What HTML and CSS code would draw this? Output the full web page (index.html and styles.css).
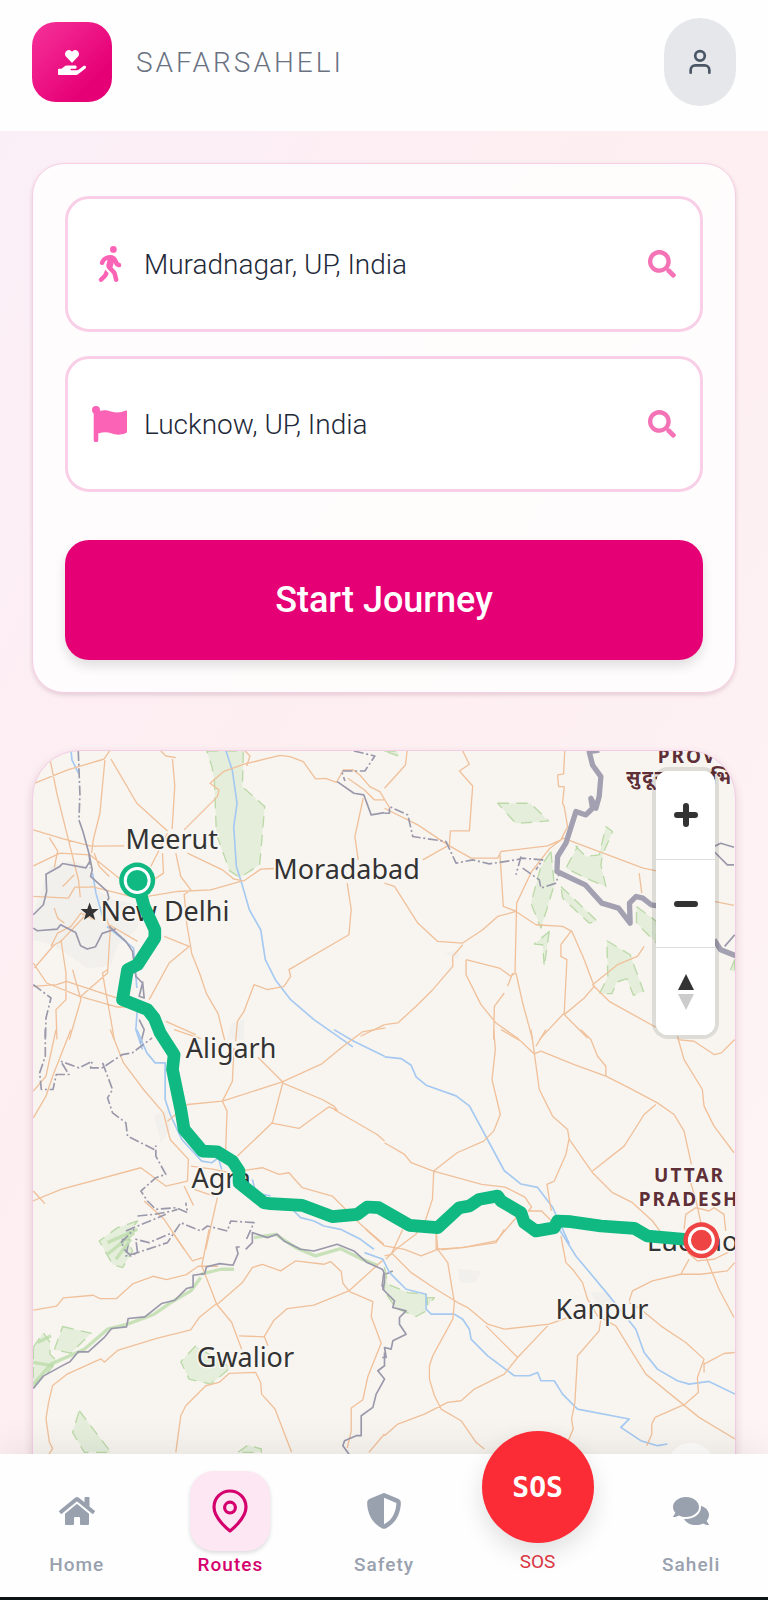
FILE: index.html
```html
<!DOCTYPE html>
<html lang="en">
<head>
  <meta charset="UTF-8" />
  <meta name="viewport" content="width=device-width, initial-scale=1.0" />
  <title>SafarSaheli - Routes</title>
  <link rel="stylesheet" href="styles.css">
</head>
<body>
  <div class="app">

    <!-- Header -->
    <header class="header">
      <div class="brand">
        <div class="logo">
          <svg width="28" height="25" viewBox="0 0 576 512" fill="currentColor"><path d="M275.3 250.5c7 7.4 18.4 7.4 25.5 0l108.9-114.2c31.6-33.2 29.8-88.2-5.6-118.8-30.8-26.7-76.7-21.9-104.9 7.7L288 36.9l-11.1-11.6C248.7-4.4 202.8-9.2 172 17.5c-35.3 30.6-37.2 85.6-5.6 118.8l108.9 114.2zm290 77.6c-11.8-10.7-30.2-10-42.6 0L430.3 402c-11.3 9.1-25.4 14-40 14H272c-8.8 0-16-7.2-16-16s7.2-16 16-16h78.3c15.9 0 30.7-10.9 33.3-26.6 3.3-20-12.1-37.4-31.6-37.4H192c-27 0-53.1 9.3-74.1 26.3L71.4 384H16c-8.8 0-16 7.2-16 16v96c0 8.8 7.2 16 16 16h356.8c14.5 0 28.6-4.9 40-14L564 377c15.2-12.1 16.4-35.3 1.3-48.9z"/></svg>
        </div>
        <span class="brand-name">SAFARSAHELI</span>
      </div>
      <button type="button" class="profile-btn" aria-label="Profile">
        <svg width="32" height="32" viewBox="0 0 24 24" fill="none" stroke="currentColor" stroke-width="2" stroke-linecap="round"><circle cx="12" cy="7.4" r="3.6"/><path d="M5 20v-2a3.5 3.5 0 0 1 3.5-3.500h7a3.5 3.5 0 0 1 3.5 3.5v2"/></svg>
      </button>
    </header>

    <main class="content">
      <!-- Journey form -->
      <form class="journey-card">
        <div class="fields">
          <div class="field">
            <label for="from" aria-label="From">
              <svg width="36" height="36" viewBox="0 0 320 512" fill="currentColor"><path d="M160 48a48 48 0 1 1 96 0 48 48 0 1 1 -96 0zM126.5 199.3c-1 .4-1.9 .8-2.9 1.2l-8 3.5c-16.4 7.3-29 21.2-34.7 38.2l-2.6 7.8c-5.6 16.8-23.7 25.8-40.5 20.2s-25.8-23.7-20.2-40.5l2.6-7.8c11.4-34.1 36.6-61.9 69.4-76.5l8-3.5c20.8-9.2 43.3-14 66.1-14c44.6 0 84.8 26.8 101.9 67.9L281 232.7l21.4 10.7c15.8 7.9 22.2 27.1 14.3 42.9s-27.1 22.2-42.9 14.3L247 287.3c-10.3-5.2-18.4-13.8-22.8-24.5l-9.6-23-19.3 65.5 49.5 54c5.4 5.9 9.2 13 11.2 20.8l23 92.1c4.3 17.1-6.1 34.5-23.3 38.8s-34.5-6.1-38.8-23.3l-22-88.1-70.7-77.1c-14.8-16.1-20.3-38.6-14.7-59.7l16.9-63.5zM68.7 398l25-62.4c2.1 3 4.5 5.8 7 8.6l40.7 44.4-14.5 36.2c-2.4 6-6 11.5-10.6 16.1L54.6 502.6c-12.5 12.5-32.8 12.5-45.3 0s-12.5-32.8 0-45.3L68.7 398z"/></svg>
            </label>
            <input type="text" id="from" value="Muradnagar, UP, India" />
            <button type="button" class="search-btn" aria-label="Search start">
              <svg width="28" height="28" viewBox="0 0 512 512" fill="currentColor"><path d="M505 442.7L405.3 343c-4.5-4.5-10.6-7-17-7H372c27.6-35.3 44-79.7 44-128C416 93.1 322.9 0 208 0S0 93.1 0 208s93.1 208 208 208c48.3 0 92.7-16.4 128-44v16.3c0 6.4 2.5 12.5 7 17l99.7 99.7c9.4 9.4 24.6 9.4 33.9 0l28.3-28.3c9.4-9.4 9.4-24.6.1-34zM208 336c-70.7 0-128-57.2-128-128 0-70.7 57.2-128 128-128 70.7 0 128 57.2 128 128 0 70.7-57.2 128-128 128z"/></svg>
            </button>
          </div>
          <div class="field">
            <label for="to" aria-label="To">
              <svg width="36" height="36" viewBox="0 0 36 36" fill="currentColor"><circle cx="4" cy="4" r="4"/><path d="M1.700 4H8v.8c5-1.300 8-.3 12 .9s9 1 13-.9c1.500-.6 2 0 2 1v19.700c0 1-.5 1.500-2 2-6 2-10 1-14-.3-4-1.300-8-1.200-12.700.3V34a2.300 2.300 0 0 1-4.600 0z"/></svg>
            </label>
            <input type="text" id="to" value="Lucknow, UP, India" />
            <button type="button" class="search-btn" aria-label="Search destination">
              <svg width="28" height="28" viewBox="0 0 512 512" fill="currentColor"><path d="M505 442.7L405.3 343c-4.5-4.5-10.6-7-17-7H372c27.6-35.3 44-79.7 44-128C416 93.1 322.9 0 208 0S0 93.1 0 208s93.1 208 208 208c48.3 0 92.7-16.4 128-44v16.3c0 6.4 2.5 12.5 7 17l99.7 99.7c9.4 9.4 24.6 9.4 33.9 0l28.3-28.3c9.4-9.4 9.4-24.6.1-34zM208 336c-70.7 0-128-57.2-128-128 0-70.7 57.2-128 128-128 70.7 0 128 57.2 128 128 0 70.7-57.2 128-128 128z"/></svg>
            </button>
          </div>
        </div>
        <button type="submit" class="start-btn">Start Journey</button>
      </form>

      <!-- Map -->
      <section class="map-card" aria-label="Route map">
        <svg class="map" viewBox="96 2253 2109 2400">
          <!-- urban areas -->
          <g class="urban">
            <path d="M145 2600l70-18 55 20 10 60 50 35 90 20-10 70-60 50-20 60-70 10-70-50-60-30-60-10z"/>
            <path d="M690 3070l40-10v60h-50zM460 3350l40-20 10 60-30 40zM1372 3808l72 8-20 34-46 2zM1772 3880l50 0 20 40-50 0zM1335 2860l40-10 0 30z"/>
          </g>

          <!-- north west -->
          <g transform="translate(0 2220)">
            <path class="park" d="M618 33h110l-3 107 67 60-15 175-60 38-30-20-40-110-6-160-8-45z"/>
            <path class="river" d="M675 30l20 62 14 98-10 70 8 120 16 50 23 80 34 60 14 90 30 60 46 60 70 60 117 82M210 30l3 30 20 40M275 400l10 60 20 70M318 560l80 65 10 120M410 800l-5 70 20 60"/>
            <path class="road" d="M148 62l20 100 35 140 30 120 5 50M312 60l-15 160-20 80-5 40M100 130l100-40 110-33 18-27M330 57l78 133 92 83M515 57l7 80-8 130M480 33l15 15 30 5M97 270l90 27 83 22 100-1M97 378l80-38 90 5 100 80M145 293l25 40-10 50M500 280l-50 100M550 270l100-100 5-20-27-20 40-35 60-22 110-27 30 4 40 15 37 52 30-2 33 12 20-37 30 0 20 15 30 35 30 15 30 50M525 340l15 70 30 40-20 15M560 340l105 50 35 28 30 5 50-35 40-2M440 470l90-15 100-5 90-25M550 462l8 90 15 90 24 60 20 60 35 60 20 80M280 340l15 40 30 30M270 440l140 35M97 470l105 5 20-33 50 0M485 340l3 60-45 30M325 555l85 50M490 590l75 30-60 50-60 110M100 685l60-70 20-10 70-75M97 670l40 60 100 40 110 32 60 0M180 600l15 100 0 80-30 30 3 90M240 770l80-70 8-130-20-60M320 690l-15 10 10 60 15 80 10 60M97 740l70-5 30-10 90 30 60 20M205 900l35-120-25-90M150 620l20-40 40-20 30-40 40 20M1088 175l-25 115 10 70M1040 430l12 80-7 75-180 105 5 20-20 30-50 10-40-15-30 80-20 30-5 60M495 845l90 40M1080 890l72-35M1152 180l-30 0-30-30-50-35M730 30l18 18-10 30M185 440l20-20 15-15M160 505l10 30 20 15"/>
            <path class="state" d="M234 240l12 35 18 65 10 50-5 20 50 45 5 20 -20 30M97 525l30-30 10-40-2-52 40-22 10-10 70 13 12-20M97 565l12 8 60-5 10-13 45 23 15 40 20 10 25-7 20-40 40-13M325 560l50 45 20 30 10 75 20 20-10 40 15 5-5-50M415 840l15 30-10 40M1010 125l50 35 30 5 22 60 40-7"/>
            <path class="state dash" d="M232 33l5 130-3 77M97 735l53 40-15 60-2 65M1060 33l63 15-30 45-70 0 10 30M265 345l3 40"/>
          </g>

          <!-- north east -->
          <g transform="translate(1152 2220)">
            <path class="park" d="M340 190l98 0 55 53-98 8zM500 335l10 100-40 130-30-75 30-110zM575 320l30 30 40-5 20-85 20 15-30 70-5 30 15 65-60-25-60-30 35-65zM530 440l110 105-25 5-80-75zM668 603l70 42 40 110-30 12-20-50-30 10-15 35-37 0 25-50zM757 500l60 45v65l-60-60zM495 575l-15 105-5-65-25-2zM0 33h38l5 15zM1052 660l-12 30 12 10z"/>
            <path class="road" d="M68 33l-5 42-63 70M235 33l20 40-30 20 40 45-10 135-57 0-3 42-80 45M0 430l30 10 70 110 60 55 75 5 60-40 45-40 55-15 60 40 80 5 28 15 35 80 32 85-30 35-60 50M235 615l-30 35 0 30-60 70-50 50-55 50-40 5M245 660l0 45 45 90 45 55 70 50M245 660l100 25 35 25 12-10 5-210 45-95 55-70 40-30 240 90 90 18M385 700l-15 40M360 760l-30 40-2 100M395 700l20 90 30 110M0 205l100 50 90 60 70 40 80 0 10-20 140-17 40-18 20-40-10-60-5-10 5-50-17 0-3-35 18-3 5-100M347 345l10 155 40 15M560 575l-30 40 0 35 18 10-8 160-75 80M540 825l70 70M625 735l75-60 60-25 20-30M625 735l50 50 140 78M765 400l8 60M990 485l60 12"/>
            <path class="state dash" d="M0 220l15 0 0-20 55 25 15 65 100 15 30 65 50-10 50 12 80-12 20-5 60 5-20 30M410 350l-15 55M415 385l50 35 5 25 45-15 10-30"/>
            <path class="state" d="M990 320l20-10 40 12M990 335l40 40 20 0M1052 585l-30 35"/>
            <path class="country" d="M645 30l-30 5 10 40 25 35-5 60-10 35-15-30 5 30-20 20-30-10-30 95-25 40-2 45 85 40 50 55 50 15 35 45-2-60 20-20 20 5 25 20 30 5M990 600l20 30 45 18"/>
          </g>

          <!-- west -->
          <g transform="translate(0 3090)">
            <path class="park" d="M410 575l-60 20-55 40 40 70 30 10 30-50-20-40z"/>
            <path class="river" d="M408 0l30 70 25 30 30 0 0 110 15 45 35 75 60 65 30 5 20-15 10 35M755 450l10 40 45 10M880 545l20 20 40 10 30 15 50 10 60 30 40 30M1000 0l60 35 92 45"/>
            <path class="road" d="M165 0l-30 140-38 45M210 0l-55 140-20 60-38 65M328 0l40 100 60 80 60 70 20 80 55 60-3 65-65 15-75-55-240 65-85 35M97 485l35 38M500 275l60-50 105-10 180-58 120-55 60-50 60-45 70-12M665 215l30-60 5-100M665 215l14 30-5 140M710 380l105-100 32-122-75-75M845 160l120 50 35 20 10 12-25-10-90 65-85-17M1000 240l130 75 22 20M570 410l70 10 45 10 100-15 50 20 30-5 40 45 90 25 85 85 70 60M550 470l28 58M580 480l60 20M650 505l-35 155M430 515l60 55 60 90M520 0l80 27"/>
            <path class="state dash" d="M133 0l0 80-17 50 5 50 35 0 10-45 38 0-25-40 55 20 40-20-5 20 35 0 60-40 30-5 60-45M305 100l30 80-15 25 15 45 40 30 5 40 80 40 5-10 0 30 30 55-30 10-45 40 20 30 25 25 60-5 35 15-5-30M410 560l50-5 55-10 15-5M375 605l120-50M365 650l0-20 20 0-10 50 35-10 90-30 40-60 60 25 20-15 60 15 10-30 70 5-25 55"/>
          </g>

          <!-- east -->
          <g transform="translate(1152 3090)">
            <path class="river" d="M0 82l50 5 30 20 15 35 30 25 90 32 40 30 105 195 50 40 50 10 45 60 50 110"/>
            <path class="road" d="M328 0l5 60-10 90 25 105-20 50-30 30-80 35-70 55-4 85-20 60-30 45-60 45-30 30M0 340l60 35 20 25 67 25 145 40 70 8 60 30 20 30-10 12 40 0 30 30M350 0l60 35 40 38 20-8 100 40 95 35 70 35 85 45 50 35 30 50 22 100M440 0l10 70 15 110 40 80 45 40 5 30 70 100 60 60 60 30 60 55 30 40 75 28M485 0l-30 50M590 0l30 30 20 50 25 30 0 30M555 325l-10 50-35 80-22 10 13 80M625 425l95-75 60-95 35-30M880 20l20 70 55 90 5 50 30 60 60 80M880 30l50 5 60 40 22-5 40-40M900 600l5-45 30-20 40 10 15-10 30 20 5 50M920 460l15 50 20 90M400 560l-65 75-100 20-80 5M155 600l0 60"/>
          </g>

          <!-- south west -->
          <g transform="translate(0 3690)">
            <path class="park" d="M97 355l30-45 20 30 0 35 20 20-30 40-40 35zM185 292l85 20-60 60-50-10zM585 350l-45 48 25 52 65 15 60-50-50-30zM235 545l95 125h-80l-35-60zM712 670l30-22 40 12v10z"/>
            <path class="park-edge" d="M600 145l-30 40-60 35-50 35-80 30-60 15-70 60-100 45-53 60M760 25l65-10 60 40 60 25 75-22 60 30 50 20M600 135l60-15 40 0"/>
            <path class="park-edge" d="M410 0l-90 40M400 10l-80 65M390 30l-45 60M97 400l60 10M110 340l40-20"/>
            <path class="road" d="M97 243l70-12 20-25 90-8 20 10 50 0 50-45 60-22 40 10 60-15 35-25 60 0M515 10l60 85 30-10M625 0l-22 110 45 115 45 55 30 80M645 225l-50 40-25 37-100 25-120 37-40 35-10-10-100 45-45 35-12 50-8 50 10 70 10 20-20 30M650 225l75-65 30-45 30-10 55 20 45-30 85 10 20-8 32 30 5 35 20 25 70 30-5 45 30 80-40 100-15 70-35 25 0 70-12 50M715 320l75 3 30-50 40-35 80-10 105-43 105-95M790 320l12 30M525 670l15-110 15-30 60-60 40-10 30-27 80-3 15 30 3 35 40 45 50 130M1095 0l57 50M1105 670l47-55"/>
            <path class="state" d="M97 478l30-37 60-33 20-10 25-30 30 0 50-45 20-25 45-5 5-25 50-5 50-40 40-10 35-35 20-5 0-35 35-5 5-20 40-10 40 5 15-35-5-20 10 0M735 60l20-20 0-30 45 15 30-10 20 20 50 25 40 5 70-20 50 20 40 35 45 20 10 15 22-10M1150 130l-5 40 15 20M1152 370l0 40-20 15 20 25-25 45-10 40-35 25 0 60-15 0-35 15-5 15 25 35"/>
            <path class="state dash" d="M360 40l40-40M370 60l20 20 20-10-5-40 40 10 70-30"/>
          </g>

          <!-- south east -->
          <g transform="translate(1152 3690)">
            <path class="park" d="M0 115l10 50 60 25 55 5 0 50-30 17-60-25-35-50zM128 205h22l-20 25z"/>
            <path class="river" d="M-60 70l55 20 20 40 50 50 60 15 0 45 15 15 70 0 25 15 20 30 5 30 50 50 80 60 45 0 25-10 10 25 40 0 25 40 45 45 155 30-25 25 60 40 50 15 30-5M525 0l50 80 100 120 80 100 25 70 40 50 60 35 35 10 60-8 78 38"/>
            <path class="road" d="M0 50l60 10 50 20 55-22M55 0l-35 75-20 5M20 70l60 60 75 50 65 40 30 15 60 50 50 15 135-15 55-20M305 290l95 95 90-95M400 385l-40 50-90 45-40 35-40 5-70 35-80 30-40 35M155 0l5 60 30 40 20 120-5 50-60 110-10 30 0 40 15 50 20 40 60 35 45 65 25 20M360 0l-25 40-80 12-85 10M530 20l15 80 20 20 30 40 15 50 30 50 55 30 90 145 160 130 108 65M650 270l-5 35-65 75-8 140-10 50 5 30-15 35M735 215l10-30 60-30 85-20 60 0 80-10 22-25M915 90l-25 45M960 70l45 110 45 85M735 220l35 20 60 50 75 50 55 50-20 55 3 45-40 35-90 40-10 20 0 30-15 35M960 400l0 30M960 405l60-32 32-3M900 60l40 35 50-5 60-30"/>
            <path class="state" d="M0 130l0 30 -5 20 35 35-5 20 40 10-20 20 0 20 20 30-40 20-5 25-20-5 5 30-12 0"/>
          </g>

          <!-- places -->
          <path class="star" d="M266 2708l7 20h20l-16 13 6 20-17-12-17 12 6-20-16-13h20z"/>
          <g class="place">
            <text x="374" y="2548">Meerut</text>
            <text x="818" y="2638">Moradabad</text>
            <text x="299" y="2763">New Delhi</text>
            <text x="555" y="3174">Aligarh</text>
            <text x="572" y="3565">Agra</text>
            <text x="588" y="4103">Gwalior</text>
            <text x="1666" y="3960">Kanpur</text>
            <text x="1941" y="3755">Lucknow</text>
          </g>
          <g class="region">
            <text x="1973" y="2290">PROV</text>
            <text x="1878" y="2352">सुदूर</text>
            <text x="2132" y="2352">र्भि</text>
            <text x="1962" y="3547">UTTAR</text>
            <text x="1916" y="3619">PRADESH</text>
          </g>

          <!-- route -->
          <polyline class="route" points="409,2642 430,2720 462,2790 462,2815 410,2895 380,2910 365,3000 440,3030 460,3055 478,3100 520,3165 515,3210 540,3330 550,3390 605,3455 650,3457 695,3485 715,3515 715,3550 790,3610 810,3613 905,3618 995,3652 1070,3645 1100,3623 1135,3625 1227,3678 1312,3685 1377,3625 1407,3620 1437,3600 1492,3590 1502,3605 1562,3640 1572,3670 1607,3695 1662,3685 1672,3665 1712,3667 1802,3680 1902,3687 1942,3710 2052,3720 2104,3723"/>
          <g class="marker start">
            <circle cx="409" cy="2642" r="54"/>
            <circle class="ring" cx="409" cy="2642" r="36"/>
          </g>
          <g class="marker end">
            <circle cx="2104" cy="3723" r="54"/>
            <circle class="ring" cx="2104" cy="3723" r="36"/>
          </g>
        </svg>

        <div class="map-controls">
          <button type="button" aria-label="Zoom in">
            <svg width="24" height="24" viewBox="0 0 24 24" stroke="#333" stroke-width="6" stroke-linecap="round"><path d="M3 12h18M12 3v18"/></svg>
          </button>
          <button type="button" aria-label="Zoom out">
            <svg width="24" height="24" viewBox="0 0 24 24" stroke="#333" stroke-width="6" stroke-linecap="round"><path d="M3 12h18"/></svg>
          </button>
          <button type="button" aria-label="Reset north">
            <svg width="16" height="36" viewBox="0 0 16 36"><path fill="#333" d="M8 0l8 16H0z"/><path fill="#ccc" d="M8 36l8-16H0z"/></svg>
          </button>
        </div>
        <button type="button" class="locate-btn" aria-label="My location"></button>
      </section>
    </main>

    <!-- Bottom navigation -->
    <nav class="bottom-nav">
      <a href="#" class="nav-item">
        <span class="nav-icon"><svg width="36" height="32" viewBox="0 0 576 512" fill="currentColor"><path d="M280.37 148.26L96 300.11V464a16 16 0 0 0 16 16l112.06-.29a16 16 0 0 0 15.92-16V368a16 16 0 0 1 16-16h64a16 16 0 0 1 16 16v95.64a16 16 0 0 0 16 16.05L464 480a16 16 0 0 0 16-16V300L295.67 148.26a12.19 12.19 0 0 0-15.3 0zM571.6 251.47L488 182.56V44.05a12 12 0 0 0-12-12h-56a12 12 0 0 0-12 12v72.61L318.47 43a48 48 0 0 0-61 0L4.34 251.47a12 12 0 0 0-1.6 16.9l25.5 31A12 12 0 0 0 45.15 301l235.22-193.74a12.19 12.19 0 0 1 15.3 0L530.9 301a12 12 0 0 0 16.9-1.6l25.5-31a12 12 0 0 0-1.7-16.93z"/></svg></span>
        <span class="nav-label">Home</span>
      </a>
      <a href="#" class="nav-item active">
        <span class="nav-icon"><svg width="48" height="48" viewBox="0 0 24 24" fill="none" stroke="currentColor" stroke-width="1.6" stroke-linejoin="round"><path d="M20 10c0 6-8 12-8 12s-8-6-8-12a8 8 0 0 1 16 0z"/><circle cx="12" cy="10.300" r="2.700"/></svg></span>
        <span class="nav-label">Routes</span>
      </a>
      <a href="#" class="nav-item">
        <span class="nav-icon"><svg width="36" height="36" viewBox="0 0 512 512" fill="currentColor"><path d="M256 0c4.6 0 9.2 1 13.4 2.9L457.7 82.8c22 9.3 38.4 31 38.3 57.2c-.5 99.2-41.3 280.7-213.6 363.2c-16.7 8-36.1 8-52.8 0C57.3 420.7 16.5 239.2 16 140c-.1-26.2 16.3-47.9 38.3-57.2L242.7 2.9C246.8 1 251.4 0 256 0zm0 66.8V444.8C394 378 431.1 230.1 432 141.4L256 66.8z"/></svg></span>
        <span class="nav-label">Safety</span>
      </a>
      <a href="#" class="nav-item sos">
        <span class="sos-circle">SOS</span>
        <span class="nav-label">SOS</span>
      </a>
      <a href="#" class="nav-item">
        <span class="nav-icon"><svg width="36" height="32" viewBox="0 0 576 512" fill="currentColor"><path d="M416 192c0-88.4-93.1-160-208-160S0 103.6 0 192c0 34.3 14.1 65.9 38 92-13.4 30.2-35.5 54.2-35.8 54.5-2.2 2.3-2.8 5.7-1.5 8.7S4.8 352 8 352c36.6 0 66.9-12.3 88.7-25 32.2 15.7 70.3 25 111.3 25 114.9 0 208-71.6 208-160zm122 220c23.9-26 38-57.7 38-92 0-66.9-53.5-124.2-129.3-148.1.9 6.6 1.3 13.3 1.3 20.1 0 105.9-107.7 192-240 192-10.8 0-21.3-.8-31.7-1.9C207.8 439.6 281.8 480 368 480c41 0 79.1-9.2 111.3-25 21.8 12.7 52.1 25 88.7 25 3.2 0 6.1-1.9 7.3-4.8 1.3-2.9.7-6.3-1.5-8.7-.3-.3-22.4-24.2-35.8-54.5z"/></svg></span>
        <span class="nav-label">Saheli</span>
      </a>
    </nav>
  </div>
</body>
</html>
```

FILE: styles.css
```css
* { box-sizing: border-box; margin: 0; padding: 0; }

body {
  font-family: Roboto, 'Liberation Sans', sans-serif;
  background: #fff;
}

button {
  font-family: inherit;
  border: none;
  cursor: pointer;
}

svg { display: block; }

.app {
  height: 100vh;
  display: flex;
  flex-direction: column;
}

/* HEADER */
.header {
  display: flex;
  justify-content: space-between;
  align-items: center;
  padding: 18px 32px 25px;
  background: #fefefe;
}

.brand {
  display: flex;
  align-items: center;
  gap: 24px;
}

.logo {
  width: 80px;
  height: 80px;
  border-radius: 24px;
  display: flex;
  align-items: center;
  justify-content: center;
  color: #fff;
  background: linear-gradient(135deg, #f6339a, #e60076 75%);
}

.brand-name {
  font-size: 28px;
  font-weight: 300;
  letter-spacing: 3px;
  color: #6a7282;
}

.profile-btn {
  width: 72px;
  height: 88px;
  border-radius: 36px;
  display: flex;
  align-items: center;
  justify-content: center;
  background: #e5e7eb;
  color: #4a5565;
}

/* CONTENT */
.content {
  flex: 1;
  min-height: 0;
  padding: 32px 32px 0;
  overflow-y: auto;
  scrollbar-width: none;
  background: linear-gradient(120deg, #fbeff7, #fdeef1 40%, #fef4f5);
}

/* JOURNEY FORM */
.journey-card {
  padding: 32px;
  margin-bottom: 57px;
  border: 1px solid #f6cfe3;
  border-radius: 32px;
  background: rgba(255, 255, 255, 0.8);
  background-clip: padding-box;
  box-shadow: 0 2px 4px rgba(120, 60, 90, 0.2);
}

.fields {
  display: flex;
  flex-direction: column;
  gap: 24px;
}

.field {
  display: flex;
  align-items: center;
  height: 136px;
  padding: 0 24px;
  border: 3px solid #f8cfe6;
  border-radius: 24px;
  background: #fff;
  color: #fb64b6;
}

.field input {
  flex: 1;
  min-width: 0;
  height: 100%;
  padding-left: 16px;
  border: none;
  outline: none;
  background: transparent;
  font-family: inherit;
  font-size: 28px;
  font-weight: 300;
  color: #1e2939;
}

.search-btn {
  background: none;
  color: #f472b6;
}

.start-btn {
  width: 100%;
  height: 120px;
  margin-top: 48px;
  border-radius: 24px;
  background: #e60076;
  color: #fff;
  font-size: 36px;
  font-weight: 500;
  box-shadow: 0 6px 12px rgba(0, 0, 0, 0.12);
}

/* MAP */
.map-card {
  position: relative;
  overflow: hidden;
  border: 1px solid #f3cde6;
  border-radius: 48px;
  background: #f8f5f0;
  box-shadow: 0 4px 8px rgba(120, 60, 90, 0.2);
}

.map {
  width: 100%;
  height: auto;
  fill: none;
  stroke-linejoin: round;
}

.urban { fill: #f2f0ec; }

.park {
  fill: #e5eedb;
  stroke: #bbd9a8;
  stroke-width: 4;
  stroke-dasharray: 34 22;
}

.park-edge {
  stroke: #bcdcaa;
  stroke-width: 10;
  opacity: 0.8;
}

.road {
  stroke: #f0c09a;
  stroke-width: 4;
}

.river {
  stroke: #a5c9f1;
  stroke-width: 5;
}

.state {
  stroke: #9a98ab;
  stroke-width: 5;
}

.dash { stroke-dasharray: 30 8 6 8; }

.country {
  stroke: #a3a0b2;
  stroke-width: 16;
}

.star { fill: #333; }

.place {
  font-family: 'Noto Sans', sans-serif;
  font-size: 81px;
  fill: #333;
  stroke: #f9f7f3;
  stroke-width: 9;
  paint-order: stroke;
}

.region {
  font-family: 'Noto Sans', sans-serif;
  font-size: 57px;
  font-weight: 700;
  letter-spacing: 6px;
  fill: #5f2f37;
  stroke: #f9f7f3;
  stroke-width: 6;
  paint-order: stroke;
}

.route {
  stroke: #10b981;
  stroke-width: 38;
}

.marker .ring {
  stroke: #fff;
  stroke-width: 9;
}

.start { fill: #10b981; }
.end { fill: #ef4444; }

.map-controls {
  position: absolute;
  top: 20px;
  right: 20px;
  width: 59px;
  border-radius: 12px;
  overflow: hidden;
  background: #fff;
  box-shadow: 0 0 0 4px rgba(0, 0, 0, 0.1);
}

.map-controls button {
  width: 100%;
  height: 88px;
  display: flex;
  align-items: center;
  justify-content: center;
  background: #fff;
}

.map-controls button + button { border-top: 1px solid #ddd; }

.locate-btn {
  position: absolute;
  top: 692px;
  right: 20px;
  width: 48px;
  height: 48px;
  border-radius: 50%;
  background: rgba(255, 255, 255, 0.8);
}

/* BOTTOM NAV */
.bottom-nav {
  position: relative;
  display: grid;
  grid-template-columns: repeat(5, 1fr);
  align-items: start;
  padding: 17px 0 20px;
  border-bottom: 3px solid #0c1414;
  background: #fefefe;
  box-shadow: 0 -4px 36px rgba(0, 0, 0, 0.08);
}

.nav-item {
  display: flex;
  flex-direction: column;
  align-items: center;
  gap: 2px;
  color: #99a1af;
  text-decoration: none;
}

.nav-icon {
  width: 80px;
  height: 80px;
  border-radius: 24px;
  display: flex;
  align-items: center;
  justify-content: center;
}

.nav-label {
  font-size: 19px;
  line-height: 24px;
  font-weight: 500;
  letter-spacing: 1px;
}

.active { color: #d4006d; }

.active .nav-icon {
  background: #fce7f3;
  box-shadow: 0 2px 4px rgba(0, 0, 0, 0.14);
}

.sos {
  gap: 7px;
  color: #d93644;
}

.sos .nav-label {
  font-weight: 400;
  letter-spacing: 0;
}

.sos-circle {
  width: 112px;
  height: 112px;
  margin-top: -40px;
  border-radius: 50%;
  display: flex;
  align-items: center;
  justify-content: center;
  background: #fb2c36;
  color: #fff;
  font-family: 'DejaVu Sans Mono', monospace;
  font-size: 28px;
  font-weight: 700;
  box-shadow: 0 10px 24px rgba(0, 0, 0, 0.12);
}
```
